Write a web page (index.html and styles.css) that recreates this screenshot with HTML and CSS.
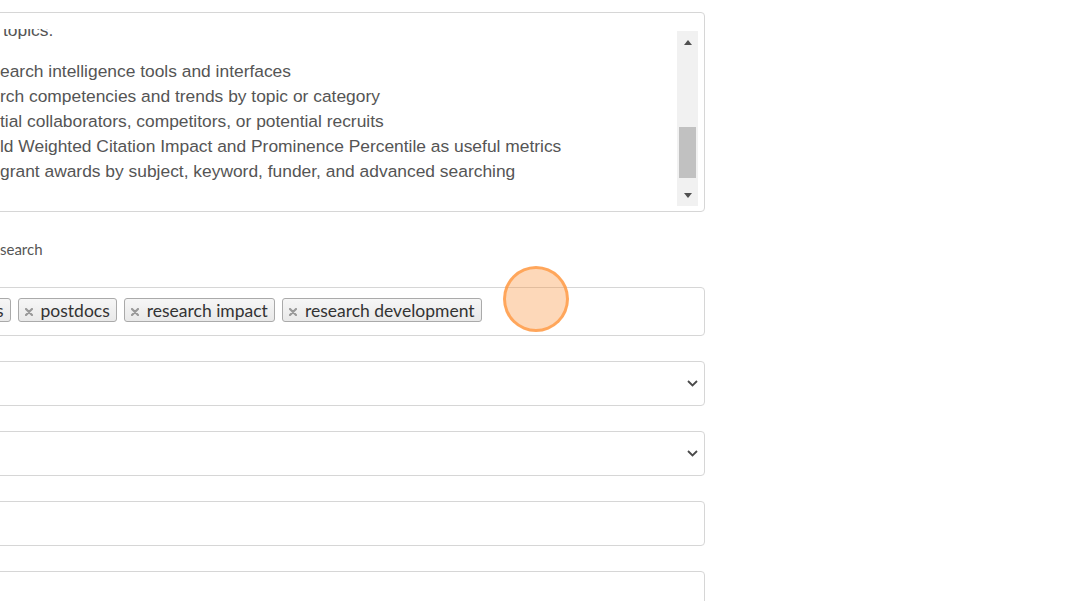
FILE: index.html
```html
<!DOCTYPE html>
<html>
<head>
<meta charset="utf-8">
<link rel="stylesheet" href="styles.css">
</head>
<body>
<div class="form">
  <div class="textarea">
    <div class="ta-view">
      <div class="ta-content">
        <p class="intro">topics.</p>
        <ul class="topics">
          <li>earch intelligence tools and interfaces</li>
          <li>rch competencies and trends by topic or category</li>
          <li>tial collaborators, competitors, or potential recruits</li>
          <li>ld Weighted Citation Impact and Prominence Percentile as useful metrics</li>
          <li>grant awards by subject, keyword, funder, and advanced searching</li>
        </ul>
      </div>
    </div>
    <div class="scrollbar">
      <div class="sb-btn"><span class="arrow-up"></span></div>
      <div class="sb-track"><div class="sb-thumb"></div></div>
      <div class="sb-btn"><span class="arrow-down"></span></div>
    </div>
  </div>

  <label class="field-label">search</label>

  <div class="tagbox">
    <span class="tag"><svg class="tag-x" width="8" height="8" viewBox="0 0 8 8"><path d="M1 1L7 7M7 1L1 7" stroke="#999" stroke-width="2.2" stroke-linecap="round"/></svg>grants</span>
    <span class="tag"><svg class="tag-x" width="8" height="8" viewBox="0 0 8 8"><path d="M1 1L7 7M7 1L1 7" stroke="#999" stroke-width="2.2" stroke-linecap="round"/></svg>postdocs</span>
    <span class="tag"><svg class="tag-x" width="8" height="8" viewBox="0 0 8 8"><path d="M1 1L7 7M7 1L1 7" stroke="#999" stroke-width="2.2" stroke-linecap="round"/></svg>research impact</span>
    <span class="tag"><svg class="tag-x" width="8" height="8" viewBox="0 0 8 8"><path d="M1 1L7 7M7 1L1 7" stroke="#999" stroke-width="2.2" stroke-linecap="round"/></svg>research development</span>
  </div>

  <div class="field select">
    <svg class="chev" width="11" height="7" viewBox="0 0 11 7"><polyline points="1,1 5.5,5.5 10,1" fill="none" stroke="#4a4a4a" stroke-width="1.8"/></svg>
  </div>
  <div class="field select">
    <svg class="chev" width="11" height="7" viewBox="0 0 11 7"><polyline points="1,1 5.5,5.5 10,1" fill="none" stroke="#4a4a4a" stroke-width="1.8"/></svg>
  </div>
  <div class="field"></div>
  <div class="field"></div>
</div>
<div class="cursor-dot"></div>
</body>
</html>
```
FILE: styles.css
```css
html, body {
  margin: 0;
  padding: 0;
  background: #fff;
  overflow: hidden;
  height: 601px;
}

.form {
  width: 805px;
  margin-left: -100px;
  padding-top: 12px;
  box-sizing: border-box;
}

.textarea {
  height: 200px;
  border: 1px solid #d6d6d6;
  border-radius: 4px;
  box-sizing: border-box;
  display: flex;
  background: #fff;
}

.ta-view {
  flex: 1;
  margin-top: 16px;
  margin-bottom: 5px;
  overflow: hidden;
}

.ta-content {
  margin-top: -11px;
  padding-left: 99px;
  font-family: "Liberation Sans", Arial, sans-serif;
  font-size: 17.4px;
  line-height: 25px;
  color: #555;
}

.intro {
  margin: 0 0 16px 0;
  padding-left: 3px;
}

.topics {
  list-style: none;
  margin: 0;
  padding: 0;
  white-space: nowrap;
}

.scrollbar {
  width: 21px;
  margin: 18px 6px 5px 0;
  background: #f1f1f1;
  display: flex;
  flex-direction: column;
}

.sb-btn {
  height: 22px;
  display: flex;
  align-items: center;
  justify-content: center;
}

.arrow-up {
  width: 0;
  height: 0;
  border-left: 4px solid transparent;
  border-right: 4px solid transparent;
  border-bottom: 5px solid #505050;
}

.arrow-down {
  width: 0;
  height: 0;
  border-left: 4px solid transparent;
  border-right: 4px solid transparent;
  border-top: 5px solid #505050;
}

.sb-track {
  flex: 1;
}

.sb-thumb {
  margin: 74px 2px 0 2px;
  height: 51px;
  background: #c1c1c1;
}

.field-label {
  display: block;
  margin: 27px 0 28px 0;
  padding-left: 100px;
  font-family: Lato, "Open Sans", sans-serif;
  font-size: 15px;
  line-height: 20px;
  color: #555;
}

.tagbox {
  height: 49px;
  border: 1px solid #d6d6d6;
  border-radius: 4px;
  box-sizing: border-box;
  padding: 10px 0 0 32px;
  display: flex;
  align-items: flex-start;
  gap: 7px;
}

.tag {
  display: inline-flex;
  align-items: center;
  height: 24px;
  box-sizing: border-box;
  padding: 0 6px 0 6px;
  border: 1px solid #aaa;
  border-radius: 3px;
  background: linear-gradient(#f6f6f6, #e9e9e9);
  font-family: Lato, "Open Sans", sans-serif;
  font-size: 17.5px;
  color: #333;
  white-space: nowrap;
}

.tag-x {
  display: block;
  margin-right: 8px;
  margin-top: 3px;
}

.field {
  height: 45px;
  margin-top: 25px;
  border: 1px solid #d6d6d6;
  border-radius: 4px;
  box-sizing: border-box;
  display: flex;
  align-items: center;
  justify-content: flex-end;
  padding-right: 6px;
}

.chev {
  display: block;
}

.cursor-dot {
  position: absolute;
  left: 503px;
  top: 266px;
  width: 60px;
  height: 60px;
  border-radius: 50%;
  background: rgba(249, 144, 55, 0.35);
  border: 3px solid rgba(255, 150, 60, 0.75);
}
```
